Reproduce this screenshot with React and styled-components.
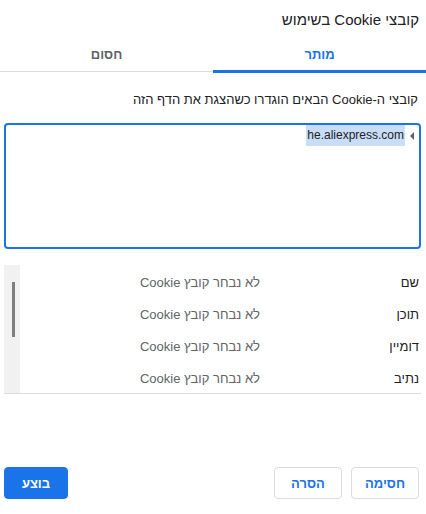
import styled, { createGlobalStyle } from "styled-components";

const GlobalStyle = createGlobalStyle`
html, body {
  margin: 0;
  padding: 0;
  background: #ffffff;
}
body {
  direction: rtl;
  font-family: "Liberation Sans", "DejaVu Sans", sans-serif;
  color: #202124;
}
`;

const Dialog = styled.div`
display: flex;
flex-direction: column;
width: 426px;
height: 514px;
box-sizing: border-box;
`;

const Title = styled.h1`
margin: 10px 7px 0 0;
font-size: 15px;
font-weight: normal;
line-height: 20px;
color: #202124;
`;

const TabBar = styled.div`
display: grid;
grid-template-columns: 1fr 1fr;
margin-top: 10px;
border-bottom: 1px solid #dadce0;
`;

const Tab = styled.div`
height: 33px;
box-sizing: border-box;
margin-bottom: -2px;
display: flex;
align-items: center;
justify-content: center;
padding-bottom: 2px;
font-size: 13px;
font-weight: bold;
color: ${(p) => (p.$active ? "#1a73e8" : "#5f6368")};
border-bottom: 3px solid ${(p) => (p.$active ? "#1a73e8" : "transparent")};
`;

const Description = styled.p`
margin: 19px 8px 0 0;
font-size: 13px;
line-height: 18px;
color: #202124;
`;

const Tree = styled.div`
margin: 14px 5px 0 4px;
height: 126px;
box-sizing: border-box;
border: 2px solid #1a73e8;
border-radius: 4px;
`;

const TreeItem = styled.div`
display: flex;
align-items: center;
height: 21px;
`;

const Twisty = styled.span`
width: 14px;
display: flex;
justify-content: center;
&::before {
  content: "";
  border-top: 4px solid transparent;
  border-bottom: 4px solid transparent;
  border-right: 4px solid #5f6368;
}
`;

const Host = styled.span`
height: 21px;
line-height: 21px;
padding: 0 1px;
font-size: 12px;
color: #202124;
background: #c9ddf9;
`;

const Details = styled.div`
display: flex;
margin: 16px 5px 0 4px;
height: 129px;
box-sizing: border-box;
border-bottom: 1px solid #dadce0;
`;

const Rows = styled.div`
flex: 1;
padding: 1px 2px 0 0;
`;

const Row = styled.div`
display: grid;
grid-template-columns: 150px 1fr;
column-gap: 9px;
align-items: center;
height: 32px;
font-size: 13px;
`;

const Label = styled.span`
color: #202124;
`;

const Value = styled.span`
color: #5f6368;
`;

const Scrollbar = styled.div`
width: 16px;
background: #f1f1f1;
direction: ltr;
padding: 17px 0 0 8px;
box-sizing: border-box;
`;

const Thumb = styled.div`
width: 3px;
height: 55px;
background: #7f7f7f;
`;

const Footer = styled.div`
margin-top: auto;
display: flex;
justify-content: space-between;
align-items: center;
padding: 0 7px 15px 4px;
`;

const Group = styled.div`
display: flex;
gap: 9px;
`;

const Button = styled.button`
height: 32px;
width: ${(p) => p.$w || 68}px;
box-sizing: border-box;
border-radius: 4px;
font-family: "Liberation Sans", "DejaVu Sans", sans-serif;
font-size: 13px;
font-weight: bold;
cursor: pointer;
border: 1px solid ${(p) => (p.$primary ? "#1a73e8" : "#dadce0")};
background: ${(p) => (p.$primary ? "#1a73e8" : "#ffffff")};
color: ${(p) => (p.$primary ? "#ffffff" : "#1a73e8")};
`;

const fields = ["שם", "תוכן", "דומיין", "נתיב"];

function App() {
  return (
    <Dialog>
      <GlobalStyle />
      <Title>קובצי Cookie בשימוש</Title>
      <TabBar>
        <Tab $active>מותר</Tab>
        <Tab>חסום</Tab>
      </TabBar>
      <Description>קובצי ה-Cookie הבאים הוגדרו כשהצגת את הדף הזה</Description>
      <Tree>
        <TreeItem>
          <Twisty />
          <Host>he.aliexpress.com</Host>
        </TreeItem>
      </Tree>
      <Details>
        <Rows>
          {fields.map((f) => (
            <Row key={f}>
              <Label>{f}</Label>
              <Value>לא נבחר קובץ Cookie</Value>
            </Row>
          ))}
        </Rows>
        <Scrollbar>
          <Thumb />
        </Scrollbar>
      </Details>
      <Footer>
        <Group>
          <Button>חסימה</Button>
          <Button>הסרה</Button>
        </Group>
        <Button $primary $w={64}>בוצע</Button>
      </Footer>
    </Dialog>
  );
}

export default App;
